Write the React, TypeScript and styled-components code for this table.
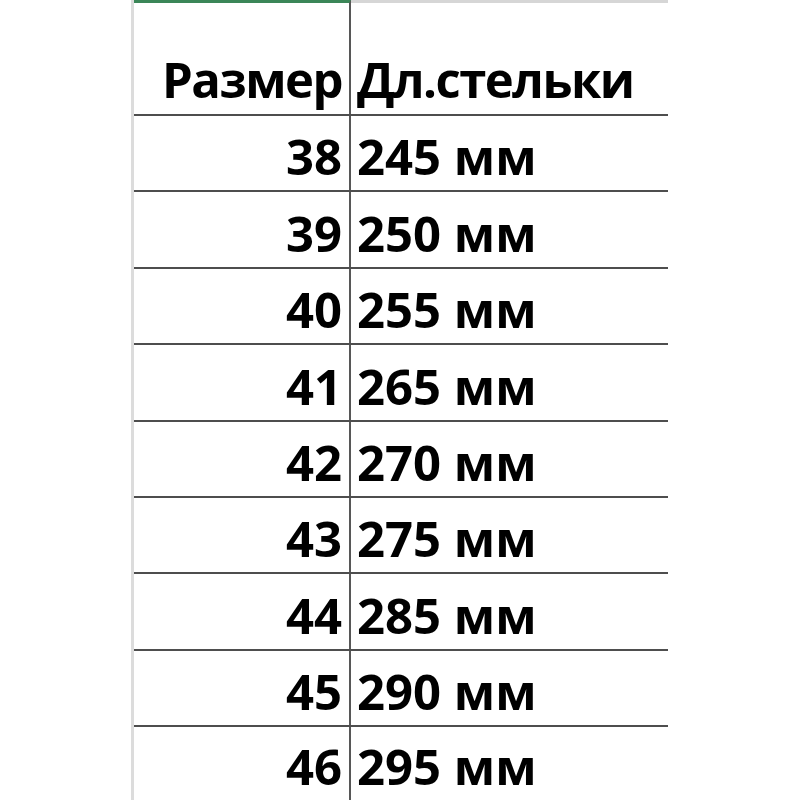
import React from "react";
import styled, { createGlobalStyle } from "styled-components";

const Global = createGlobalStyle`
  html, body { margin: 0; padding: 0; background: #ffffff; }
  body { font-family: "Open Sans", "DejaVu Sans", sans-serif; }
`;

const Page = styled.div`
  width: 800px;
  height: 800px;
  overflow: hidden;
  background: #ffffff;
`;

const Sheet = styled.div`
  margin-left: 131px;
  width: 537px;
  border-left: 3px solid #dcdcdc;
  display: flex;
  flex-direction: column;
  min-height: 800px;
  box-sizing: border-box;
`;

const Row = styled.div<{ $h: number; $pb: number; $ls?: number }>`
  display: grid;
  grid-template-columns: 217px 1fr;
  height: ${(p) => p.$h}px;
  flex: 0 0 auto;
  box-sizing: border-box;
  border-bottom: 2px solid #4e4e4e;
  & > div {
    padding-bottom: ${(p) => p.$pb}px;
    letter-spacing: ${(p) => p.$ls ?? 0}px;
  }
`;

const Cell = styled.div<{ $side: "left" | "right"; $top?: string }>`
  display: flex;
  align-items: flex-end;
  box-sizing: border-box;
  font-family: "Open Sans", "DejaVu Sans", sans-serif;
  font-weight: 700;
  font-size: 49px;
  line-height: 1;
  color: #000000;
  white-space: nowrap;
  border-top: ${(p) => (p.$top ? `3px solid ${p.$top}` : "none")};
  ${(p) =>
    p.$side === "left"
      ? `justify-content: flex-end; padding-right: 7px; border-right: 2px solid #575757;`
      : `justify-content: flex-start; padding-left: 6px;`}
`;

const Tail = styled.div`
  display: grid;
  grid-template-columns: 217px 1fr;
  flex: 1 1 auto;
  & > div:first-child {
    border-right: 2px solid #575757;
  }
`;

const rows: [string, string][] = [
  ["38", "245 мм"],
  ["39", "250 мм"],
  ["40", "255 мм"],
  ["41", "265 мм"],
  ["42", "270 мм"],
  ["43", "275 мм"],
  ["44", "285 мм"],
  ["45", "290 мм"],
  ["46", "295 мм"],
];

export default function App() {
  return (
    <Page>
      <Global />
      <Sheet>
        <Row $h={116} $pb={10} $ls={-1.5}>
          <Cell $side="left" $top="#3b8658">Размер</Cell>
          <Cell $side="right" $top="#d6d6d6">Дл.стельки</Cell>
        </Row>
        {rows.map(([a, b], i) => (
          <Row key={a} $h={i === 8 ? 120 : 76.4} $pb={i === 8 ? 54 : 9}>
            <Cell $side="left">{a}</Cell>
            <Cell $side="right">{b}</Cell>
          </Row>
        ))}
        <Tail>
          <div />
          <div />
        </Tail>
      </Sheet>
    </Page>
  );
}
